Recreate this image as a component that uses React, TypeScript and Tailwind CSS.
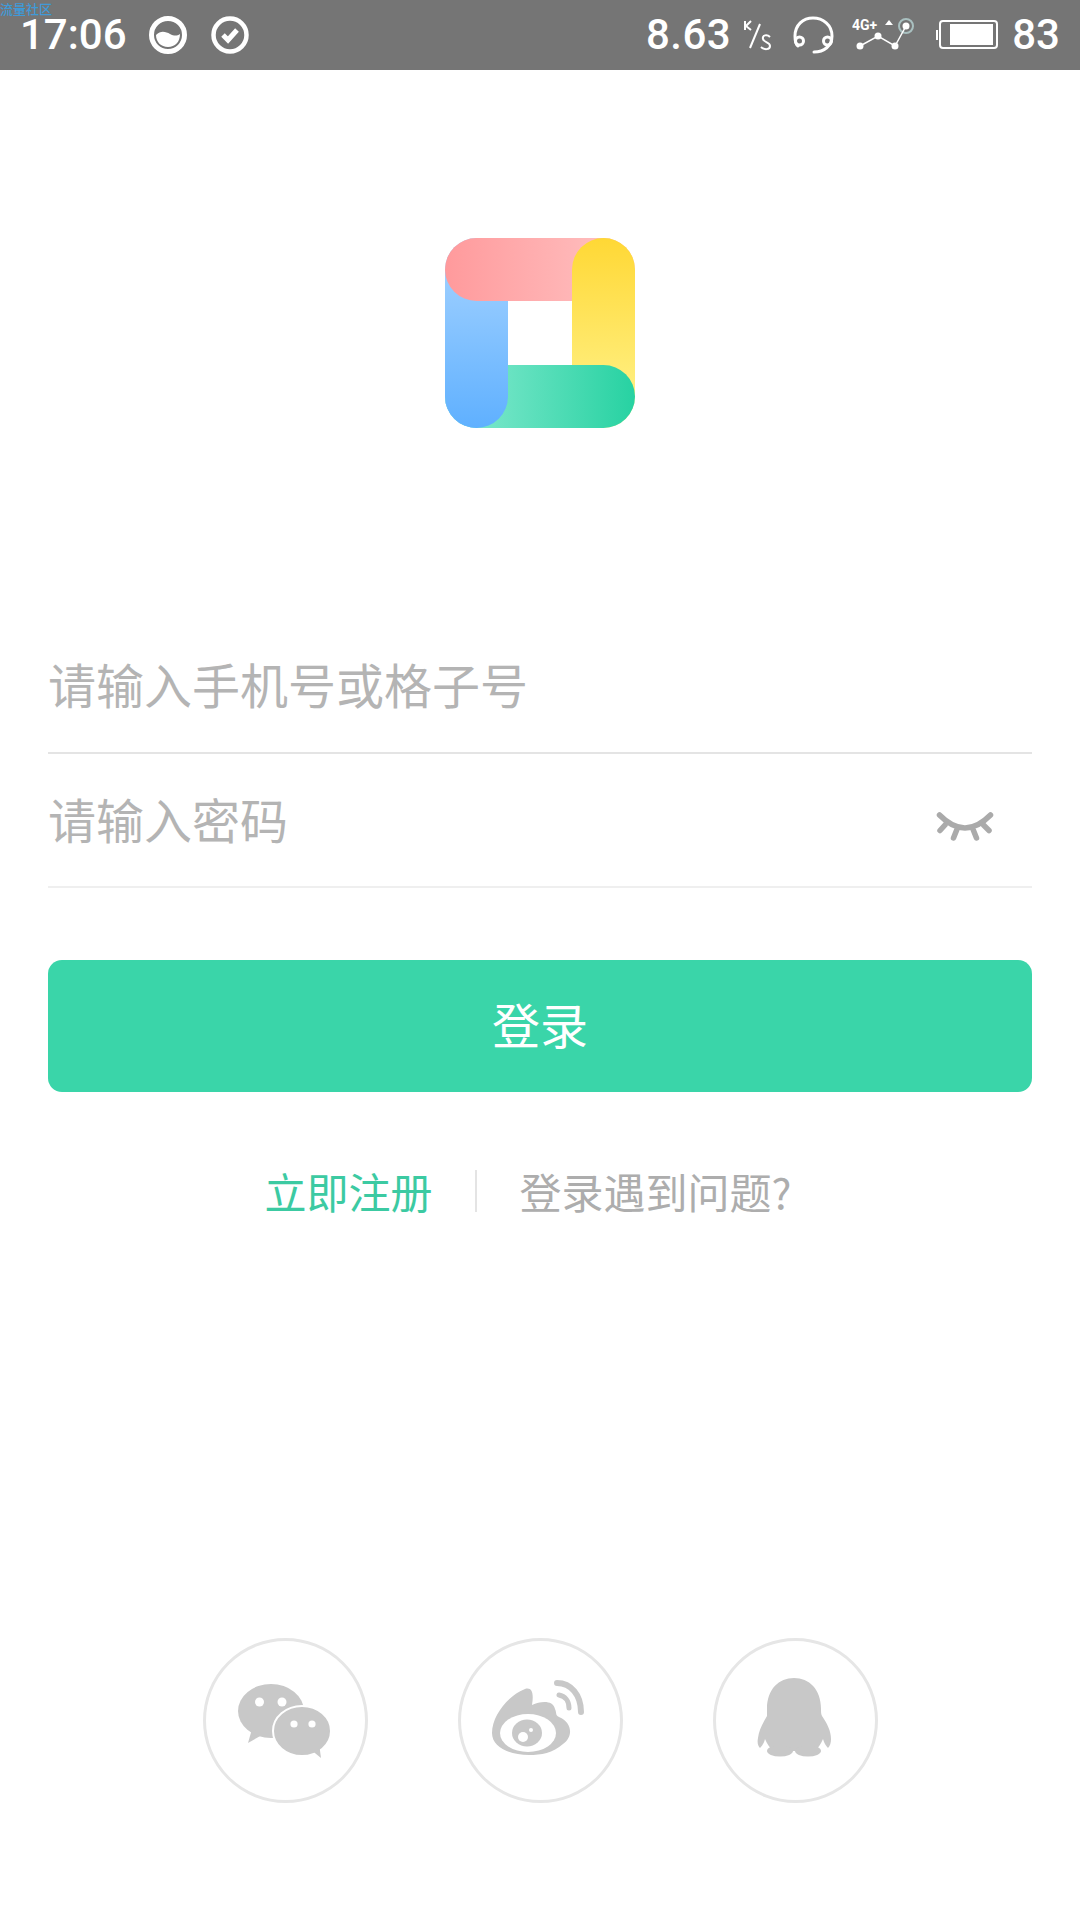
const cjk = "font-['Noto_Sans_CJK_SC','Noto_Sans',sans-serif]";

function LogoMark() {
  return (
    <svg className="blur-[0.7px]" width="190" height="190" viewBox="0 0 190 190">
      <defs>
        <linearGradient id="pink" x1="0" x2="1" y1="0" y2="0">
          <stop offset="0" stopColor="#ff9a9c" />
          <stop offset="1" stopColor="#ffc4c4" />
        </linearGradient>
        <linearGradient id="yellow" x1="0" x2="0" y1="0" y2="1">
          <stop offset="0" stopColor="#ffd835" />
          <stop offset="1" stopColor="#fff490" />
        </linearGradient>
        <linearGradient id="green" x1="0" x2="1" y1="0" y2="0">
          <stop offset="0" stopColor="#8beBd2" />
          <stop offset="1" stopColor="#27d2a2" />
        </linearGradient>
        <linearGradient id="blue" x1="0" x2="0" y1="0" y2="1">
          <stop offset="0" stopColor="#a9d5ff" />
          <stop offset="1" stopColor="#5fb0ff" />
        </linearGradient>
        <clipPath id="lower">
          <rect x="0" y="95" width="190" height="95" />
        </clipPath>
      </defs>
      <rect x="0" y="0" width="63" height="190" rx="31.5" fill="url(#blue)" />
      <rect x="0" y="0" width="190" height="63" rx="31.5" fill="url(#pink)" />
      <rect x="127" y="0" width="63" height="190" rx="31.5" fill="url(#yellow)" />
      <rect x="0" y="127" width="190" height="63" rx="31.5" fill="url(#green)" />
      <rect x="0" y="0" width="63" height="190" rx="31.5" fill="url(#blue)" clipPath="url(#lower)" />
    </svg>
  );
}

function ClosedEye() {
  return (
    <svg className="mt-[12px]" width="60" height="32" viewBox="0 0 60 32" fill="none" stroke="#aaaaaa" strokeWidth="5.5" strokeLinecap="round">
      <path d="M4.5 5 Q30 31 55.5 5" />
      <path d="M10 15 L5 20.5" />
      <path d="M21.7 20 L18.5 28" />
      <path d="M38.3 20 L41.5 28" />
      <path d="M48.5 15 L54 20.5" />
    </svg>
  );
}

function WechatIcon() {
  return (
    <svg width="100" height="100" viewBox="0 0 100 100" fill="#c8c8c8">
      <g transform="translate(-1 0)">
        <ellipse cx="37" cy="40" rx="33" ry="27" />
        <path d="M18 58 L14 72 L28 64 Z" />
        <ellipse cx="25.5" cy="31" rx="4.5" ry="4.5" fill="#fff" />
        <ellipse cx="48" cy="31" rx="4.5" ry="4.5" fill="#fff" />
        <ellipse cx="68" cy="60" rx="29" ry="25" stroke="#fff" strokeWidth="2" />
        <path d="M76 78 L87 87 L85 72 Z" />
        <circle cx="60" cy="53" r="3.6" fill="#fff" />
        <circle cx="78" cy="53" r="3.6" fill="#fff" />
      </g>
    </svg>
  );
}

function WeiboIcon() {
  return (
    <svg width="100" height="100" viewBox="0 0 100 100" fill="#c8c8c8">
      <g transform="translate(-1 0)">
        <path d="M3 62 C3 44 20 24 36 18 C43 16 45 22 43 34 C52 30 64 29 66 38 C68 42 66 44 70 46 C84 52 84 66 74 73 C64 82 52 84 40 84 C20 84 3 76 3 62 Z" />
        <ellipse cx="39" cy="62" rx="28" ry="19" fill="#fff" />
        <ellipse cx="38" cy="62" rx="15" ry="13.5" />
        <ellipse cx="34" cy="66" rx="5" ry="5" fill="#fff" />
        <circle cx="42" cy="59" r="2" fill="#fff" />
        <path d="M68 12 C82 12 92 24 92 41" fill="none" stroke="#c8c8c8" strokeWidth="6" strokeLinecap="round" />
        <path d="M70 24 C76 25 80 30 80 37" fill="none" stroke="#c8c8c8" strokeWidth="5" strokeLinecap="round" />
      </g>
    </svg>
  );
}

function QqIcon() {
  return (
    <svg width="100" height="100" viewBox="0 0 100 100" fill="#c8c8c8">
      <g transform="translate(-2 0)">
        <path d="M51 7 C66 7 78 18 78 38 C78 41 78 43 79 45 C84 52 88 60 88 68 C88 72 87 75 85 77 C83 75 81 72 80 68 C78 73 75 77 72 80 L30 80 C27 77 24 73 22 68 C21 72 19 75 17 77 C15 75 14 72 15 67 C16 59 20 52 24 45 C24 43 24 41 24 38 C24 18 36 7 51 7 Z" />
        <ellipse cx="37" cy="80" rx="13" ry="5.5" />
        <ellipse cx="65" cy="80" rx="13" ry="5.5" />
      </g>
    </svg>
  );
}

function SocialButton({ children }: { children: React.ReactNode }) {
  return (
    <div className="w-[165px] h-[165px] rounded-full border-[3px] border-[#e6e6e6] flex items-center justify-center">
      {children}
    </div>
  );
}

function StatusBar() {
  return (
    <div className="relative h-[70px] bg-[#757575] flex items-center justify-between pl-[20px] pr-[20px] text-white font-['Roboto',sans-serif] font-medium">
      <span className={`absolute left-0 top-0 text-[13px] leading-[17px] text-[#3f9ad8] ${cjk}`}>流量社区</span>
      <div className="flex items-center">
        <span className="text-[42px] leading-[30px] w-[129px]">17:06</span>
        <svg width="38" height="38" viewBox="0 0 38 38">
          <circle cx="19" cy="19" r="16.5" fill="none" stroke="#fff" strokeWidth="5" />
          <path d="M7 19 C12 14 17 16 21 18 C25 20 28 20 31 18 C31 26 26 31 19 31 C12 31 7 26 7 19 Z" fill="#fff" />
        </svg>
        <svg className="ml-[24px]" width="38" height="38" viewBox="0 0 38 38" fill="none" stroke="#fff">
          <circle cx="19" cy="19" r="16.5" strokeWidth="4.5" />
          <path d="M12 19 L17 24 L26 14" strokeWidth="5" />
        </svg>
      </div>
      <div className="flex items-center">
        <span className="text-[42px] leading-[30px] tracking-[0.5px]">8.63</span>
        <svg className="ml-[12px]" width="30" height="32" viewBox="0 0 30 32" fill="none" stroke="#fff" strokeWidth="2">
          <path d="M2 2 V11 M8 2 L3 7 L8 11" />
          <path d="M17 5 L7 29" />
          <path d="M27 18 C24 15 19 16 20 20 C21 24 27 23 27 27 C27 31 21 31 18 28" />
        </svg>
        <svg className="ml-[20px]" width="42" height="38" viewBox="0 0 42 38" fill="none" stroke="#fff" strokeWidth="3" strokeLinecap="round">
          <path d="M5 30 C2 28 2 24 2 20 C2 9 10 2 20 2 C30 2 39 9 39 20 C39 30 31 36 21 36" />
          <circle cx="6.5" cy="25" r="4" />
          <circle cx="34.5" cy="25" r="4" />
        </svg>
        <svg className="ml-[17px]" width="64" height="34" viewBox="0 0 64 34">
          <text x="0" y="12" fontSize="14" fontWeight="700" fill="#fff" fontFamily="Roboto">4G+</text>
          <path d="M33 7 L37 2 L41 7 Z" fill="#fff" />
          <circle cx="54" cy="8" r="7" fill="none" stroke="#a9c0c0" strokeWidth="2" />
          <circle cx="54" cy="8" r="3.5" fill="#fff" />
          <path d="M8 28 L26 18 L43 28 L54 8" fill="none" stroke="#fff" strokeWidth="1.5" />
          <circle cx="8" cy="28" r="3.5" fill="#fff" />
          <circle cx="26" cy="18" r="3.5" fill="#fff" />
          <circle cx="43" cy="28" r="3.5" fill="#fff" />
        </svg>
        <svg className="ml-[20px]" width="62" height="30" viewBox="0 0 62 30">
          <rect x="0" y="10" width="2" height="10" fill="#fff" />
          <rect x="4" y="1" width="57" height="27" rx="3" fill="none" stroke="#fff" strokeWidth="2" />
          <rect x="14" y="4" width="43" height="21" fill="#fff" />
        </svg>
        <span className="ml-[14px] text-[42px] leading-[30px]">83</span>
      </div>
    </div>
  );
}

export default function App() {
  return (
    <div className={`w-[1080px] h-[1920px] bg-white flex flex-col overflow-hidden ${cjk}`}>
      <StatusBar />

      <div className="mt-[168px] flex justify-center">
        <LogoMark />
      </div>

      <div className="mt-[192px] px-[48px]">
        <div className="h-[134px] border-b-2 border-[#e4e4e4] flex items-center text-[48px] leading-none text-[#b4b4b4]">
          <span className="pb-[7px]">请输入手机号或格子号</span>
        </div>
        <div className="h-[134px] border-b-2 border-[#efefef] flex items-center justify-between pr-[37px] text-[48px] leading-none text-[#b4b4b4]">
          <span className="pb-[5px]">请输入密码</span>
          <ClosedEye />
        </div>

        <button className="mt-[72px] w-full h-[132px] pb-[6px] rounded-[14px] bg-[#3ad5a9] flex items-center justify-center text-[48px] text-white">
          登录
        </button>
      </div>

      <div className="mt-[78px] pr-[24px] flex items-center justify-center text-[42px] leading-none">
        <span className="text-[#3ccaa2]">立即注册</span>
        <div className="w-[2px] h-[42px] ml-[42px] mr-[43px] bg-[#e4e4e4]" />
        <span className="text-[#adadad]">登录遇到问题?</span>
      </div>

      <div className="mt-auto mb-[117px] flex justify-center gap-[90px]">
        <SocialButton><WechatIcon /></SocialButton>
        <SocialButton><WeiboIcon /></SocialButton>
        <SocialButton><QqIcon /></SocialButton>
      </div>
    </div>
  );
}
